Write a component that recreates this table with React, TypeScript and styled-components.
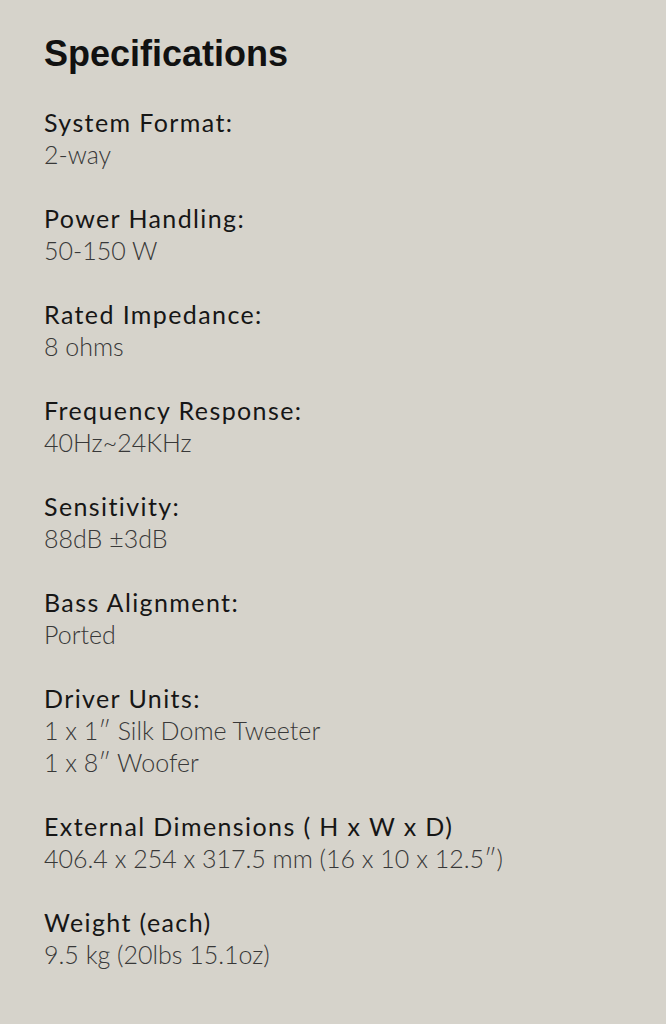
import styled, { createGlobalStyle } from "styled-components";

const GlobalStyle = createGlobalStyle`
  html, body {
    margin: 0;
    padding: 0;
    background: #d6d3cb;
  }
`;

const Page = styled.main`
  width: 666px;
  min-height: 1024px;
  box-sizing: border-box;
  padding: 34px 44px 0;
  background: #d6d3cb;
  font-family: "Lato", "Liberation Sans", sans-serif;
`;

const Title = styled.h1`
  margin: 0 0 32px;
  font-family: "Liberation Sans", Arial, sans-serif;
  font-size: 36px;
  font-weight: 700;
  line-height: 40px;
  color: #111;
`;

const SpecList = styled.dl`
  margin: 0;
  display: flex;
  flex-direction: column;
  gap: 32px;
`;

const Spec = styled.div`
  display: flex;
  flex-direction: column;
`;

const Label = styled.dt`
  font-size: 25px;
  font-weight: 400;
  line-height: 32px;
  letter-spacing: 1.4px;
  color: #161616;
`;

const Value = styled.dd`
  margin: 0;
  font-size: 25px;
  font-weight: 300;
  line-height: 32px;
  color: #383838;
`;

const specs: { label: string; values: string[] }[] = [
  { label: "System Format:", values: ["2-way"] },
  { label: "Power Handling:", values: ["50-150 W"] },
  { label: "Rated Impedance:", values: ["8 ohms"] },
  { label: "Frequency Response:", values: ["40Hz~24KHz"] },
  { label: "Sensitivity:", values: ["88dB ±3dB"] },
  { label: "Bass Alignment:", values: ["Ported"] },
  {
    label: "Driver Units:",
    values: ["1 x 1″ Silk Dome Tweeter", "1 x 8″ Woofer"],
  },
  {
    label: "External Dimensions ( H x W x D)",
    values: ["406.4 x 254 x 317.5 mm (16 x 10 x 12.5″)"],
  },
  { label: "Weight (each)", values: ["9.5 kg (20lbs 15.1oz)"] },
];

export default function App() {
  return (
    <>
      <GlobalStyle />
      <Page>
        <Title>Specifications</Title>
        <SpecList>
          {specs.map((s) => (
            <Spec key={s.label}>
              <Label>{s.label}</Label>
              {s.values.map((v) => (
                <Value key={v}>{v}</Value>
              ))}
            </Spec>
          ))}
        </SpecList>
      </Page>
    </>
  );
}
